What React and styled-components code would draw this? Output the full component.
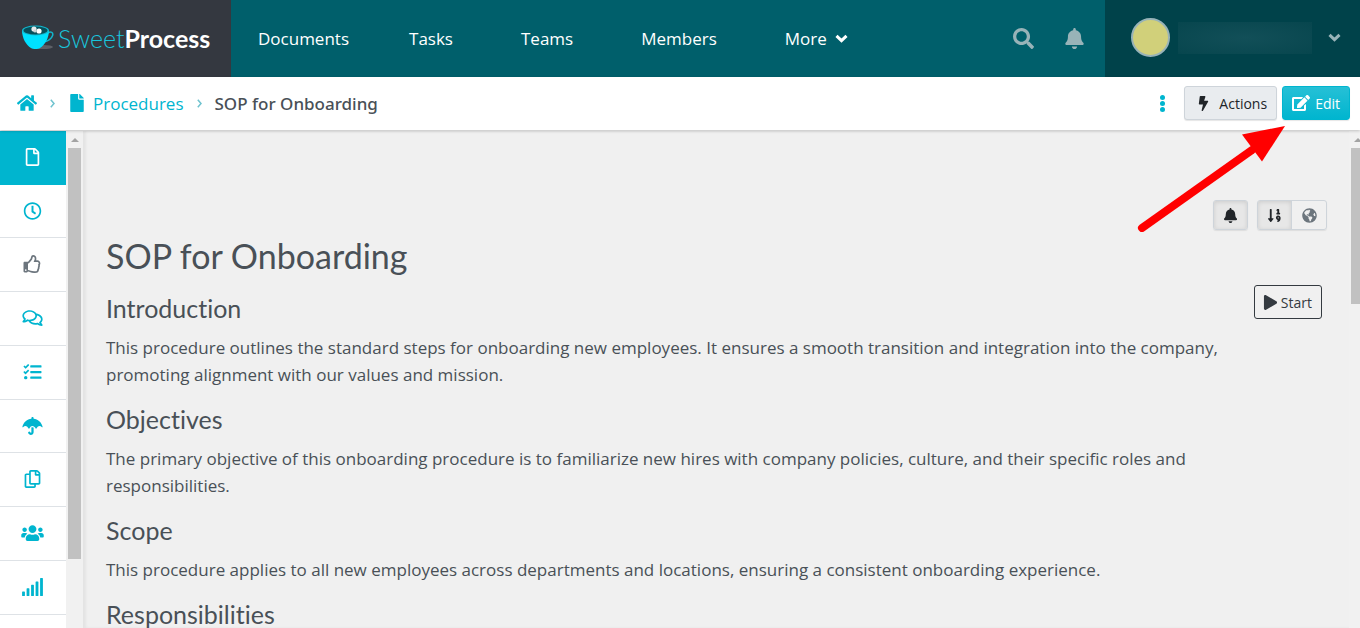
import React, { useState } from "react";
import styled, { createGlobalStyle, css } from "styled-components";
import {
    FaBell,
    FaBolt,
    FaEdit,
    FaFile,
    FaGlobeAmericas,
    FaHome,
    FaPlay,
    FaRegClock,
    FaRegComments,
    FaRegCopy,
    FaRegFile,
    FaRegThumbsUp,
    FaSearch,
    FaSignal,
    FaSortNumericDown,
    FaTasks,
    FaUmbrella,
    FaUsers,
} from "react-icons/fa";

const navItems = ["Documents", "Tasks", "Teams", "Members"];

const sideItems = [
    { id: "overview", label: "Overview", icon: FaRegFile },
    { id: "history", label: "History", icon: FaRegClock },
    { id: "approvals", label: "Approvals", icon: FaRegThumbsUp, muted: true },
    { id: "comments", label: "Comments", icon: FaRegComments },
    { id: "tasks", label: "Tasks", icon: FaTasks },
    { id: "policies", label: "Policies", icon: FaUmbrella },
    { id: "versions", label: "Versions", icon: FaRegCopy },
    { id: "teams", label: "Teams", icon: FaUsers },
    { id: "stats", label: "Statistics", icon: FaSignal },
];

const sections = [
    {
        title: "Introduction",
        text: "This procedure outlines the standard steps for onboarding new employees. It ensures a smooth transition and integration into the company, promoting alignment with our values and mission.",
    },
    {
        title: "Objectives",
        text: "The primary objective of this onboarding procedure is to familiarize new hires with company policies, culture, and their specific roles and responsibilities.",
    },
    {
        title: "Scope",
        text: "This procedure applies to all new employees across departments and locations, ensuring a consistent onboarding experience.",
    },
    { title: "Responsibilities" },
];

function CupLogo() {
    return (
        <svg width="32" height="25" viewBox="0 0 32 25" aria-hidden="true">
            <ellipse cx="21" cy="22" rx="10" ry="2" fill="#5d6066" />
            <path
                d="M26 8c3-2 5.500-.5 4.600 2.500-.9 3-4.600 5.800-8.600 6.300"
                fill="none"
                stroke="#12b5cc"
                strokeWidth="1.500"
            />
            <path d="M0 5c0 8 4 15 9 18 2 1.400 7 1.400 9 0 5-3 9-10 9-18z" fill="#00e1ff" />
            <ellipse cx="13.500" cy="5.500" rx="13.500" ry="5" fill="#12b5cc" />
            <ellipse cx="13.500" cy="5.500" rx="12" ry="4" fill="#064f5a" />
            <circle cx="12" cy="4" r="2.600" fill="#e6e9ea" />
            <circle cx="17" cy="6" r="2.600" fill="#ffffff" />
            <circle cx="13" cy="6" r="1.600" fill="#c9d3d5" />
        </svg>
    );
}

function ChevronDown() {
    return (
        <svg width="13" height="9" viewBox="0 0 13 9" aria-hidden="true">
            <path d="M1.500 1.800 6.500 6.600l5-4.800" fill="none" stroke="currentColor" strokeWidth="3" />
        </svg>
    );
}

function Separator() {
    return (
        <svg width="5" height="9" viewBox="0 0 5 9" aria-hidden="true">
            <path d="M.8.8 4 4.500.8 8.200" fill="none" stroke="#6fc3cf" strokeWidth="1.500" />
        </svg>
    );
}

function Header() {
    return (
        <TopBar>
            <LogoArea href="#">
                <CupLogo />
                <LogoText>
                    Sweet<LogoBold>Process</LogoBold>
                </LogoText>
            </LogoArea>
            <Nav>
                {navItems.map((item) => (
                    <NavLink key={item} href="#">
                        {item}
                    </NavLink>
                ))}
                <MoreButton type="button">
                    More <ChevronDown />
                </MoreButton>
            </Nav>
            <HeaderTools>
                <ToolButton type="button" aria-label="Search">
                    <FaSearch size={21} />
                </ToolButton>
                <ToolButton type="button" aria-label="Notifications">
                    <FaBell size={21} />
                </ToolButton>
            </HeaderTools>
            <UserMenu type="button" aria-label="Account">
                <Avatar />
                <UserName />
                <ChevronDown />
            </UserMenu>
        </TopBar>
    );
}

function SideBar() {
    const [current, setCurrent] = useState("overview");

    return (
        <SideArea>
            <SideList>
                {sideItems.map(({ id, label, icon: Icon, muted }) => (
                    <SideButton
                        key={id}
                        type="button"
                        aria-label={label}
                        $active={current === id}
                        $muted={muted}
                        onClick={() => setCurrent(id)}
                    >
                        <Icon />
                    </SideButton>
                ))}
            </SideList>
            <ScrollTrack>
                <ScrollArrow />
                <ScrollThumb $height="411px" />
            </ScrollTrack>
        </SideArea>
    );
}

function PointerArrow() {
    return (
        <PointerSvg width="152" height="112" viewBox="0 0 152 112" aria-hidden="true">
            <line x1="7" y1="108" x2="117" y2="30" stroke="#ff0000" strokeWidth="8" strokeLinecap="round" />
            <path d="M150 6 107 14.500 127 41.500z" fill="#ff0000" />
        </PointerSvg>
    );
}

export default function App() {
    return (
        <Page>
            <GlobalStyle />
            <Header />
            <SubHeader>
                <Crumbs aria-label="Breadcrumb">
                    <CrumbLink href="#" aria-label="Home">
                        <FaHome size={20} />
                    </CrumbLink>
                    <Separator />
                    <CrumbLink href="#">
                        <FaFile size={18} /> Procedures
                    </CrumbLink>
                    <Separator />
                    <CrumbCurrent>SOP for Onboarding</CrumbCurrent>
                </Crumbs>
                <Actions>
                    <DotsButton type="button" aria-label="More options">
                        <Dot />
                        <Dot />
                        <Dot />
                    </DotsButton>
                    <Button type="button">
                        <FaBolt size={15} /> Actions
                    </Button>
                    <Button type="button" $primary>
                        <FaEdit size={18} /> Edit
                    </Button>
                </Actions>
            </SubHeader>
            <Body>
                <SideBar />
                <Content>
                    <OptionRow>
                        <OptionGroup>
                            <OptionButton type="button" aria-label="Subscribe" $pressed>
                                <FaBell size={15} />
                            </OptionButton>
                        </OptionGroup>
                        <OptionGroup>
                            <OptionButton type="button" aria-label="Numbered steps" $pressed>
                                <FaSortNumericDown size={15} />
                            </OptionButton>
                            <OptionButton type="button" aria-label="Public">
                                <FaGlobeAmericas size={15} />
                            </OptionButton>
                        </OptionGroup>
                    </OptionRow>
                    <Title>SOP for Onboarding</Title>
                    <Columns>
                        <Article>
                            {sections.map((section) => (
                                <section key={section.title}>
                                    <SectionTitle>{section.title}</SectionTitle>
                                    {section.text && <Paragraph>{section.text}</Paragraph>}
                                </section>
                            ))}
                        </Article>
                        <StartButton type="button">
                            <FaPlay size={15} /> Start
                        </StartButton>
                    </Columns>
                </Content>
                <PageTrack>
                    <ScrollArrow />
                    <ScrollThumb $height="156px" />
                </PageTrack>
            </Body>
            <PointerArrow />
        </Page>
    );
}

const GlobalStyle = createGlobalStyle`
    * {
        box-sizing: border-box;
    }
    body {
        margin: 0;
        background-color: #f0f0f0;
        color: #495057;
        font-family: "Segoe UI", "Open Sans", "Noto Sans", sans-serif;
        font-size: 17px;
    }
    button {
        margin: 0;
        padding: 0;
        border: 0;
        background: none;
        font: inherit;
        color: inherit;
        cursor: pointer;
    }
    a {
        text-decoration: none;
    }
    svg {
        flex-shrink: 0;
    }
`;

const Page = styled.div`
    position: relative;
    height: 100vh;
    display: flex;
    flex-direction: column;
    overflow: hidden;
`;

const TopBar = styled.header`
    height: 77px;
    flex-shrink: 0;
    display: flex;
    background-color: #005f6b;
    color: #fff;
`;

const LogoArea = styled.a`
    width: 231px;
    padding: 0 0 2px 22px;
    display: flex;
    align-items: center;
    gap: 4px;
    background-color: #343840;
`;

const LogoText = styled.span`
    color: #19c5dc;
    font-family: Lato, sans-serif;
    font-size: 25px;
    font-weight: 300;
`;

const LogoBold = styled.span`
    color: #fff;
    font-weight: 700;
`;

const Nav = styled.nav`
    flex: 1;
    padding-left: 27px;
    display: flex;
    align-items: center;
    gap: 68px;
`;

const NavLink = styled.a`
    color: #fff;
    &:first-child {
        margin-right: -8px;
    }
`;

const MoreButton = styled.button`
    display: flex;
    align-items: center;
    gap: 8px;
`;

const HeaderTools = styled.div`
    padding-right: 20px;
    display: flex;
    align-items: center;
    gap: 30px;
`;

const ToolButton = styled.button`
    display: flex;
    color: #98b3b8;
`;

const UserMenu = styled.button`
    width: 255px;
    padding: 0 19px 2px 26px;
    display: flex;
    align-items: center;
    background-color: #00424a;
    color: #98b3b8;
`;

const Avatar = styled.span`
    width: 39px;
    height: 39px;
    border: 2px solid #98b3b8;
    border-radius: 50%;
    background-color: #d1d07a;
`;

const UserName = styled.span`
    width: 134px;
    height: 32px;
    margin: 0 auto 0 8px;
    background: radial-gradient(ellipse at center, #124f58, #07464e);
`;

const SubHeader = styled.div`
    position: relative;
    height: 53px;
    flex-shrink: 0;
    padding: 0 10px 1px 17px;
    display: flex;
    align-items: center;
    justify-content: space-between;
    background-color: #fff;
    box-shadow: 0 1px 3px rgba(0, 0, 0, 0.2);
`;

const Crumbs = styled.nav`
    display: flex;
    align-items: center;
    gap: 13px;
`;

const CrumbLink = styled.a`
    display: flex;
    align-items: center;
    gap: 7px;
    color: #00b5cf;
`;

const CrumbCurrent = styled.span`
    font-family: "Segoe UI", "Noto Sans", sans-serif;
    font-weight: 500;
`;

const Actions = styled.div`
    display: flex;
    align-items: center;
    gap: 5px;
`;

const DotsButton = styled.button`
    margin-right: 14px;
    display: flex;
    flex-direction: column;
    gap: 1px;
`;

const Dot = styled.span`
    width: 5px;
    height: 5px;
    border-radius: 50%;
    background-color: #00b5cf;
`;

const Button = styled.button`
    height: 34px;
    padding: 0 9px 0 11px;
    display: flex;
    align-items: center;
    gap: 8px;
    border: 1px solid #ced4da;
    border-radius: 3px;
    background: #e9ecef;
    box-shadow: 0 1px 1px rgba(0, 0, 0, 0.1);
    color: #212529;
    font-size: 14px;
    ${(props) =>
        props.$primary &&
        css`
            padding: 0 9px;
            gap: 5px;
            border-color: #00b5cf;
            background: linear-gradient(#26c0d6, #00b5cf);
            color: #fff;
        `}
`;

const Body = styled.div`
    flex: 1;
    min-height: 0;
    display: flex;
    padding-top: 1px;
`;

const SideArea = styled.aside`
    width: 83px;
    flex-shrink: 0;
    display: flex;
    overflow: hidden;
`;

const SideList = styled.div`
    width: 66px;
    display: flex;
    flex-direction: column;
    background-color: #fff;
`;

const SideButton = styled.button`
    height: 54px;
    flex-shrink: 0;
    padding: 0 1px 1px 0;
    display: flex;
    align-items: center;
    justify-content: center;
    border-bottom: 1px solid #dee2e6;
    color: ${(props) => (props.$muted ? "#6c757d" : "#00b5cf")};
    &:nth-child(4n + 2) {
        height: 53px;
    }
    svg {
        width: 23px;
        height: 18px;
    }
    ${(props) =>
        props.$active &&
        css`
            border-color: #00b5cf;
            background-color: #00b5cf;
            color: #fff;
        `}
`;

const ScrollTrack = styled.div`
    flex: 1;
    padding: 0 2px;
    background-color: #f1f1f1;
`;

const PageTrack = styled.div`
    width: 11px;
    flex-shrink: 0;
    padding-left: 2px;
    overflow: hidden;
    background-color: #f1f1f1;
`;

const ScrollArrow = styled.div`
    width: 13px;
    height: 17px;
    display: flex;
    align-items: center;
    justify-content: center;
    &::before {
        content: "";
        border: 4px solid transparent;
        border-top: 0;
        border-bottom-color: #a3a3a3;
    }
`;

const ScrollThumb = styled.div`
    width: 13px;
    height: ${(props) => props.$height};
    background-color: #c1c1c1;
`;

const Content = styled.main`
    flex: 1;
    min-width: 0;
    padding: 69px 22px 0 23px;
    overflow: hidden;
    box-shadow: inset 3px 0 3px rgba(0, 0, 0, 0.05);
`;

const OptionRow = styled.div`
    display: flex;
    justify-content: flex-end;
    gap: 9px;
`;

const OptionGroup = styled.div`
    display: flex;
    border: 1px solid #ced4da;
    border-radius: 3px;
    box-shadow: 0 1px 1px rgba(0, 0, 0, 0.08);
    overflow: hidden;
`;

const OptionButton = styled.button`
    width: 33px;
    height: 28px;
    display: flex;
    align-items: center;
    justify-content: center;
    color: #6c757d;
    & + & {
        width: 35px;
        border-left: 1px solid #ced4da;
    }
    ${(props) =>
        props.$pressed &&
        css`
            background-color: #e7e7e7;
            box-shadow: inset 0 1px 4px rgba(0, 0, 0, 0.12);
            color: #212529;
        `}
`;

const Title = styled.h1`
    margin: 4px 0 7px;
    font-family: Lato, sans-serif;
    font-size: 34px;
    font-weight: 400;
    line-height: 44px;
`;

const Columns = styled.div`
    display: flex;
    align-items: flex-start;
    justify-content: space-between;
`;

const Article = styled.article`
    flex: 1;
    max-width: 1120px;
    padding-top: 7px;
`;

const SectionTitle = styled.h2`
    margin: 0 0 10px;
    font-family: Lato, sans-serif;
    font-size: 25px;
    font-weight: 400;
    font-variant-ligatures: none;
    line-height: 32px;
`;

const Paragraph = styled.p`
    margin: 0 0 15px;
    line-height: 27px;
`;

const StartButton = styled.button`
    height: 34px;
    margin-right: 5px;
    padding: 0 9px 0 8px;
    display: flex;
    align-items: center;
    gap: 3px;
    border: 1px solid #343a40;
    border-radius: 3px;
    color: #343a40;
    font-size: 14px;
`;

const PointerSvg = styled.svg`
    position: absolute;
    top: 120px;
    right: 73px;
    pointer-events: none;
`;
